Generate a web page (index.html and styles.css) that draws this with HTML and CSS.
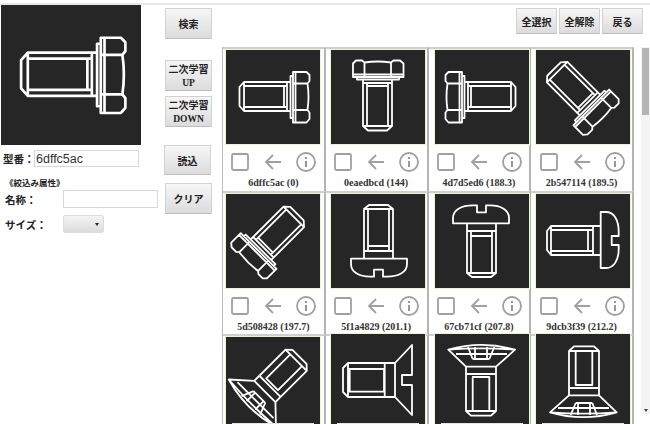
FILE: index.html
```html
<!DOCTYPE html>
<html lang="ja">
<head>
<meta charset="utf-8">
<title>類似検索</title>
<link rel="stylesheet" href="styles.css">
</head>
<body>
<svg class="defs" width="0" height="0" aria-hidden="true">
  <defs>
    <g id="hex">
      <path d="M64.5 32H18L13.5 37V56L18 61H64.5M18 32V61M18 36H61M18 57H61M58 36V57M61 32V61"/>
      <path d="M67 26H64.5V68H67M67 22H80.5L83.5 25V31L81.5 33.5Q83.5 46.5 81.5 60L83.5 62.5V69L80.5 72.5H67ZM69.5 22V72.5M67 33.5H81.5M67 60H81.5"/>
    </g>
    <g id="pan">
      <path d="M11 37L15 32H57V61H15L11 56ZM15 32V61M15 36H57M15 57H57M52 36V57M57 32H64.7M57 61H64.7"/>
      <path d="M64.7 18H70C78 18 82.7 26 82.7 38V42H75.7V51H82.7V55C82.7 66 78 74 70 74H64.7Z"/>
    </g>
    <g id="flat">
      <path d="M57 29H17L12 34V58L17 63H57M17 29V63M18.7 35H53V57.7H18.7ZM53.7 29V63"/>
      <path d="M57 29H64V63H57M64 29L81 11V41H71V51H81V81L64 63"/>
    </g>
    <g id="cross">
      <path d="M54 31H17L12.3 36V56L17 61H54M17 31V61M17 37.7H51V54.3H17ZM54 31V61"/>
      <path d="M54 31H61.3V61H54M61.3 31L78.3 13.3Q88 46.6 78.3 80L61.3 61M78.3 13.3Q81 46.6 78.3 80"/>
      <path d="M69 37.7V54.3M81 33L69 37.7M81 59.3L69 54.3M81 40H69M81 52H69M74 21V72"/>
    </g>
  </defs>
</svg>
<div class="app">
  <section class="side">
    <div class="form">
      <svg class="bolt preview" viewBox="0 0 94 94"><use href="#hex"/></svg>
      <div class="part-row">
        <label class="label part-label" for="part">型番：</label>
        <input id="part" class="field part-field" type="text" value="6dffc5ac">
      </div>
      <div class="filter-title">《絞込み属性》</div>
      <div class="attr-row">
        <label class="label" for="attr-name">名称：</label>
        <input id="attr-name" class="field attr-field" type="text">
      </div>
      <div class="attr-row size-row">
        <span class="label">サイズ：</span>
        <div class="select"><span class="caret"></span></div>
      </div>
    </div>
    <div class="actions">
      <button class="btn tall search">検索</button>
      <button class="btn tall learn-up">二次学習<br><b class="latin">UP</b></button>
      <button class="btn tall learn-down">二次学習<br><b class="latin">DOWN</b></button>
      <button class="btn tall load">読込</button>
      <button class="btn tall clear">クリア</button>
    </div>
  </section>
  <main class="results">
    <div class="toolbar">
      <button class="btn small">全選択</button>
      <button class="btn small">全解除</button>
      <button class="btn small">戻る</button>
    </div>
    <div class="browser">
      <div class="grid">
        <article class="tile">
          <svg class="bolt thumb" viewBox="0 0 94 94"><use href="#hex"/></svg>
          <div class="tools"><svg class="tool" viewBox="0 0 20 20"><rect x="2" y="2" width="16" height="16" rx="1.5"/></svg><svg class="tool" viewBox="0 0 20 20"><path d="M18 10H3M10 3L3 10L10 17"/></svg><svg class="tool" viewBox="0 0 20 20"><circle cx="10" cy="10" r="9"/><path class="dot" d="M10 9V15M10 5V7"/></svg></div>
          <div class="name">6dffc5ac (0)</div>
        </article>
        <article class="tile">
          <svg class="bolt thumb" viewBox="0 0 94 94"><use href="#hex" transform="translate(0 94) rotate(-90)"/></svg>
          <div class="tools"><svg class="tool" viewBox="0 0 20 20"><rect x="2" y="2" width="16" height="16" rx="1.5"/></svg><svg class="tool" viewBox="0 0 20 20"><path d="M18 10H3M10 3L3 10L10 17"/></svg><svg class="tool" viewBox="0 0 20 20"><circle cx="10" cy="10" r="9"/><path class="dot" d="M10 9V15M10 5V7"/></svg></div>
          <div class="name">0eaedbcd (144)</div>
        </article>
        <article class="tile">
          <svg class="bolt thumb" viewBox="0 0 94 94"><use href="#hex" transform="translate(94 0) scale(-1 1)"/></svg>
          <div class="tools"><svg class="tool" viewBox="0 0 20 20"><rect x="2" y="2" width="16" height="16" rx="1.5"/></svg><svg class="tool" viewBox="0 0 20 20"><path d="M18 10H3M10 3L3 10L10 17"/></svg><svg class="tool" viewBox="0 0 20 20"><circle cx="10" cy="10" r="9"/><path class="dot" d="M10 9V15M10 5V7"/></svg></div>
          <div class="name">4d7d5ed6 (188.3)</div>
        </article>
        <article class="tile">
          <svg class="bolt thumb" viewBox="0 0 94 94"><use href="#hex" transform="translate(41.3 -23.4) rotate(45)"/></svg>
          <div class="tools"><svg class="tool" viewBox="0 0 20 20"><rect x="2" y="2" width="16" height="16" rx="1.5"/></svg><svg class="tool" viewBox="0 0 20 20"><path d="M18 10H3M10 3L3 10L10 17"/></svg><svg class="tool" viewBox="0 0 20 20"><circle cx="10" cy="10" r="9"/><path class="dot" d="M10 9V15M10 5V7"/></svg></div>
          <div class="name">2b547114 (189.5)</div>
        </article>
        <article class="tile">
          <svg class="bolt thumb" viewBox="0 0 94 94"><use href="#hex" transform="translate(113.4 43) rotate(135)"/></svg>
          <div class="tools"><svg class="tool" viewBox="0 0 20 20"><rect x="2" y="2" width="16" height="16" rx="1.5"/></svg><svg class="tool" viewBox="0 0 20 20"><path d="M18 10H3M10 3L3 10L10 17"/></svg><svg class="tool" viewBox="0 0 20 20"><circle cx="10" cy="10" r="9"/><path class="dot" d="M10 9V15M10 5V7"/></svg></div>
          <div class="name">5d508428 (197.7)</div>
        </article>
        <article class="tile">
          <svg class="bolt thumb" viewBox="0 0 94 94"><use href="#pan" transform="translate(94 0) rotate(90)"/></svg>
          <div class="tools"><svg class="tool" viewBox="0 0 20 20"><rect x="2" y="2" width="16" height="16" rx="1.5"/></svg><svg class="tool" viewBox="0 0 20 20"><path d="M18 10H3M10 3L3 10L10 17"/></svg><svg class="tool" viewBox="0 0 20 20"><circle cx="10" cy="10" r="9"/><path class="dot" d="M10 9V15M10 5V7"/></svg></div>
          <div class="name">5f1a4829 (201.1)</div>
        </article>
        <article class="tile">
          <svg class="bolt thumb" viewBox="0 0 94 94"><use href="#pan" transform="translate(0 94) rotate(-90)"/></svg>
          <div class="tools"><svg class="tool" viewBox="0 0 20 20"><rect x="2" y="2" width="16" height="16" rx="1.5"/></svg><svg class="tool" viewBox="0 0 20 20"><path d="M18 10H3M10 3L3 10L10 17"/></svg><svg class="tool" viewBox="0 0 20 20"><circle cx="10" cy="10" r="9"/><path class="dot" d="M10 9V15M10 5V7"/></svg></div>
          <div class="name">67cb71cf (207.8)</div>
        </article>
        <article class="tile">
          <svg class="bolt thumb" viewBox="0 0 94 94"><use href="#pan"/></svg>
          <div class="tools"><svg class="tool" viewBox="0 0 20 20"><rect x="2" y="2" width="16" height="16" rx="1.5"/></svg><svg class="tool" viewBox="0 0 20 20"><path d="M18 10H3M10 3L3 10L10 17"/></svg><svg class="tool" viewBox="0 0 20 20"><circle cx="10" cy="10" r="9"/><path class="dot" d="M10 9V15M10 5V7"/></svg></div>
          <div class="name">9dcb3f39 (212.2)</div>
        </article>
        <article class="tile">
          <svg class="bolt thumb" viewBox="0 0 94 94"><use href="#cross" transform="translate(114.7 43.7) rotate(135)"/><rect class="cut" x="6" y="86" width="82" height="8"/></svg>
        </article>
        <article class="tile raised">
          <svg class="bolt thumb" viewBox="0 0 94 94"><use href="#flat"/><rect class="cut" x="6" y="89" width="82" height="5"/></svg>
        </article>
        <article class="tile raised">
          <svg class="bolt thumb" viewBox="0 0 94 94"><use href="#cross" transform="translate(0 94) rotate(-90)"/><rect class="cut" x="6" y="89" width="82" height="5"/></svg>
        </article>
        <article class="tile raised">
          <svg class="bolt thumb" viewBox="0 0 94 94"><use href="#cross" transform="translate(94 0) rotate(90)"/><rect class="cut" x="6" y="89" width="82" height="5"/></svg>
        </article>
      </div>
      <div class="scrollbar">
        <span class="arrow arrow-up"></span>
        <div class="scroll-thumb"></div>
        <span class="arrow arrow-down"></span>
      </div>
    </div>
  </main>
</div>
</body>
</html>
```
FILE: styles.css
```css
* { box-sizing: border-box; }
html, body { margin: 0; height: 424px; overflow: hidden; background: #fff; }
body {
  width: 650px;
  font-family: "Liberation Serif", "Noto Sans CJK JP", serif;
  color: #222;
}
.defs { position: absolute; }

.app {
  display: flex;
  height: 424px;
  padding-top: 3px;
  background: linear-gradient(#fff 3px, #e6e6e6 3px, #e6e6e6 5px, #fff 5px);
}

/* left side */
.side { display: flex; width: 222px; flex: none; }
.form { width: 164px; flex: none; padding: 2px 0 0 1px; }
.preview { display: block; width: 140px; height: 140px; }
.bolt {
  background: #262626;
  fill: none;
  stroke: #fff;
  stroke-width: 1.8;
  stroke-linejoin: round;
}
.cut { fill: #e4e4e4; stroke: none; }
.label {
  font: bold 10.5px "Noto Sans CJK JP", sans-serif;
  color: #222;
  white-space: nowrap;
}
.part-row { display: flex; align-items: center; margin: 5px 0 0 2px; }
.part-label { width: 31px; flex: none; }
.field {
  display: block;
  border: 1px solid #d8d8d8;
  background: #fff;
  padding: 0 1px;
  font: 12.5px "Liberation Sans", sans-serif;
  color: #333;
  outline: none;
}
.part-field { width: 105px; height: 17px; flex: none; }
.filter-title {
  font: bold 8.5px "Noto Sans CJK JP", sans-serif;
  margin: 9px 0 0 4px;
  line-height: 12px;
}
.attr-row { display: flex; align-items: center; padding-left: 4px; margin-top: 2px; }
.attr-row .label { width: 58px; flex: none; }
.attr-field { width: 95px; height: 18px; flex: none; }
.size-row { margin-top: 7px; }
.select {
  display: flex;
  align-items: center;
  justify-content: flex-end;
  width: 41px;
  height: 18px;
  padding-right: 4px;
  border: 1px solid #ddd;
  border-radius: 2px;
  background: linear-gradient(#f4f4f4, #dcdcdc);
}
.caret {
  width: 0;
  height: 0;
  border: 2px solid transparent;
  border-top: 3px solid #222;
  border-bottom: 0;
}

.actions {
  display: flex;
  flex-direction: column;
  align-items: flex-start;
  width: 58px;
  flex: none;
  padding: 5px 0 0 1px;
}
.btn {
  display: block;
  padding: 0;
  border: 1px solid #d2d2d2;
  border-bottom-color: #bdbdbd;
  border-radius: 1px;
  background: linear-gradient(#f6f6f6, #dcdcdc);
  font: bold 10px/13px "Noto Sans CJK JP", sans-serif;
  color: #222;
}
.tall { width: 47px; }
.search { height: 31px; }
.learn-up { height: 31px; margin-top: 21px; }
.learn-down { height: 31px; margin-top: 5px; }
.load { height: 30px; margin: 18px 0 0 -1px; }
.clear { height: 31px; margin-top: 8px; }
.latin { font: bold 9.5px/12px "Liberation Serif", serif; }

/* results */
.results { flex: 1; min-width: 0; display: flex; flex-direction: column; }
.toolbar {
  display: flex;
  justify-content: flex-end;
  gap: 2px;
  height: 44px;
  padding: 5px 7px 0 0;
}
.small { width: 41px; height: 26px; }
.browser { display: flex; flex: 1; min-height: 0; overflow: hidden; }
.grid {
  display: grid;
  grid-template-columns: repeat(4, 102.75px);
  grid-auto-rows: 143.5px;
  width: 411px;
  flex: none;
  border-left: 1px solid #bbb;
}
.tile {
  display: flex;
  flex-direction: column;
  align-items: center;
  border-top: 2px solid #cfcfcf;
  border-right: 2px solid #b4b4b4;
}
.thumb {
  display: block;
  width: 96px;
  height: 96px;
  flex: none;
  border: 1px solid #e6f9cc;
}
.tile:nth-child(4n+2) .thumb { margin-left: 3px; }
.tile:nth-child(4n+3) .thumb { margin-left: 6px; }
.tile:nth-child(4n) .thumb { margin-left: 2px; }
.raised .thumb { margin-top: -3px; }
.tools {
  display: flex;
  justify-content: space-between;
  width: 86px;
  height: 20px;
  margin-top: 7px;
}
.tool {
  width: 20px;
  height: 20px;
  fill: none;
  stroke: #a0a0a0;
  stroke-width: 1.8;
}
.dot { stroke: #8c8c8c; }
.name {
  font: bold 10px/12px "Liberation Serif", serif;
  color: #333;
  margin-top: 5px;
  white-space: nowrap;
}

.scrollbar {
  display: flex;
  flex-direction: column;
  align-items: center;
  width: 9px;
  height: 373px;
  margin: -6px 0 0 8px;
  background: #f4f4f4;
}
.arrow { width: 0; height: 0; flex: none; border: 2px solid transparent; }
.arrow-up { border-top: 0; border-bottom: 3px solid #777; margin: 2px 0; }
.arrow-down { border-bottom: 0; border-top: 3px solid #444; margin: auto 0 2px; }
.scroll-thumb { width: 7px; height: 67px; background: #b4b4b4; flex: none; }
```
